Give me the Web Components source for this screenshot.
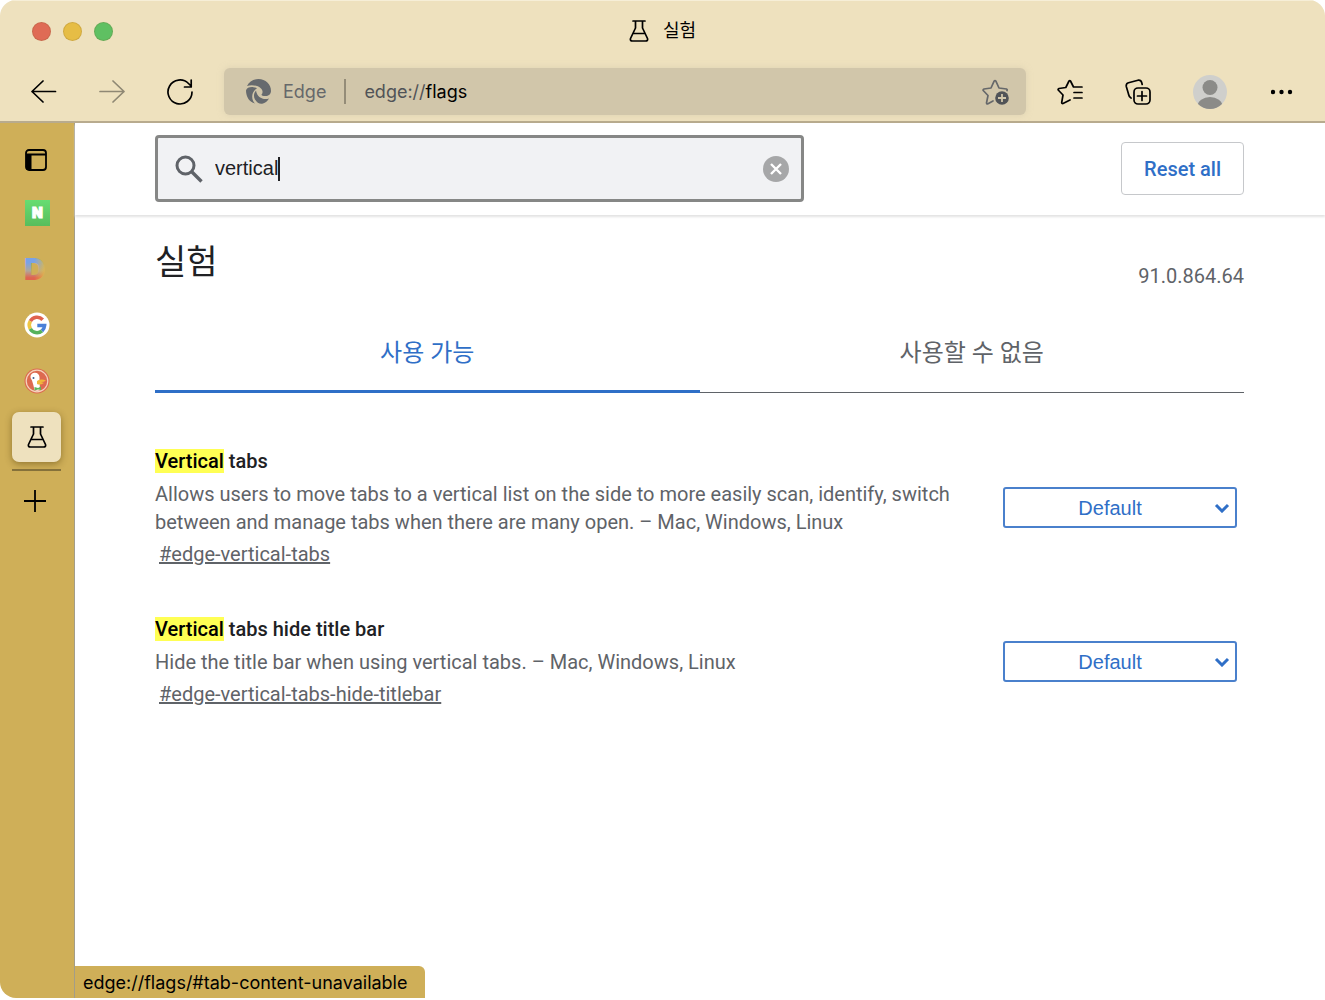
<!DOCTYPE html>
<html lang="ko">
<head>
<meta charset="utf-8">
<title>실험</title>
<style>
    html, body {
        margin: 0;
        background: white;
    }
    body {
        --bar-color: #eee1be;
        --field-color: #d1c6aa;
        --side-color: #cfaf58;
        --link-color: #2f6fc7;
        --text-color: #202124;
        --text-secondary-color: #5f6368;
        font-family: Roboto, "Noto Sans CJK KR", sans-serif;
        font-size: 20px;
        line-height: 28px;
        color: var(--text-color);
    }
</style>
</head>
<body>
<browser-window>
    <title-bar slot="title">실험</title-bar>
    <tool-bar slot="toolbar"></tool-bar>
    <side-tabs slot="tabs"></side-tabs>
    <flags-page>
        <flag-item flag="edge-vertical-tabs">
            <span slot="title"><mark style="background:#ffff54;color:black">Vertical</mark> tabs</span>
            <span slot="description">Allows users to move tabs to a vertical list on the side to more easily scan, identify, switch between and manage tabs when there are many open. – Mac, Windows, Linux</span>
        </flag-item>
        <flag-item flag="edge-vertical-tabs-hide-titlebar">
            <span slot="title"><mark style="background:#ffff54;color:black">Vertical</mark> tabs hide title bar</span>
            <span slot="description">Hide the title bar when using vertical tabs. – Mac, Windows, Linux</span>
        </flag-item>
    </flags-page>
    <status-bubble slot="status">edge://flags/#tab-content-unavailable</status-bubble>
</browser-window>

<script>
const line = 'fill="none" stroke="currentColor" stroke-width="1.7" stroke-linecap="round" stroke-linejoin="round"';

// name: [width, height, markup]
const icons = {
    flask: [20, 24, `<g ${line}><path d="M4 2H16M6.500 2V9L1.500 19.500Q.8 22 3.500 22H16.500Q19.200 22 18.500 19.500L13.500 9V2M4.500 14.500H15.500"/></g>`],
    back: [26, 24, `<g ${line}><path d="M24.500 11.500H1M12 1L1 11.500L12 22"/></g>`],
    forward: [26, 24, `<g ${line}><path d="M1 11.500H25M14 1L25 11.500L14 22"/></g>`],
    reload: [26, 26, `<g ${line}><path d="M25 13A12 12 0 1 1 21.500 4.500L24 7M24.200 1V8H17.500"/></g>`],
    edge: [25, 25, `<g fill="#666a6e"><path d="M1 7C3 2.500 8 0 12.500 0C19.500 0 25 5 25 12C25 15 22.500 17 19.500 17C17 17 15.500 16.500 15.500 15.500C17 14 17 11.500 15 9.500C12 6.300 5.500 5.300 1 7Z"/><path d="M0 11.500C.5 8.800 4 7.800 7.500 8.200C9.500 8.500 10.500 9 11 9.300C8.200 11 6.200 14 6.200 17.500C6.200 20.500 7.300 23 9 24.500C3.500 23 0 18 0 11.500Z"/><path d="M10 11.500C7.500 14.500 7.500 18 9 20.500C11 24 14 25.300 17 24.500C19.500 23.800 21.500 22 23 19.500C17.500 21.500 11 18.500 10 11.500Z"/></g>`],
    starAdd: [28, 28, `<g ${line}><path d="M11 23L5.500 26Q4.500 26 4.500 25L6 17.500L1.200 12.500Q.8 11.500 2 11L9 10L12 3.300Q13 2 14 3.300L17 10L24.500 11Q25.500 11.500 25 12.500"/></g><circle cx="20" cy="20" r="6.800" fill="#505357"/><path d="M20 16V24M16 20H24" stroke="#d1c6aa" stroke-width="1.800"/>`],
    favorites: [26, 26, `<g ${line}><path d="M13 21L6 24.500Q4.700 24.700 4.700 23.500L6 16L1.200 11Q.8 10 2 9.500L8.800 8.500L12 2Q12.800 1 13.500 2L16.500 8H25M17 13.500H25M17 19H25"/></g>`],
    collections: [26, 26, `<g ${line}><path d="M6 19C4 18 3.800 16.500 3.500 15L1.300 7.500Q.8 4.500 3.500 3.700L13 1.200Q16 .8 16.700 3.500L17.200 5.500"/><rect x="9" y="9" width="16" height="16" rx="4"/><path d="M17 12.500V21.500M12.500 17H21.500"/></g>`],
    avatar: [34, 34, `<clipPath id="c"><circle cx="17" cy="17" r="17"/></clipPath><g clip-path="url(#c)"><rect width="34" height="34" fill="#cfcfcc"/><circle cx="17" cy="12.500" r="7.500" fill="#8b8b88"/><ellipse cx="17" cy="31.500" rx="12.500" ry="9.500" fill="#8b8b88"/></g>`],
    more: [22, 6, `<circle cx="2" cy="3" r="2.200"/><circle cx="10.500" cy="3" r="2.200"/><circle cx="19" cy="3" r="2.200"/>`],
    panel: [26, 24, `<rect x="2" y="2" width="20" height="20" rx="3" fill="none" stroke="black" stroke-width="1.800"/><path d="M2 6.500H22" stroke="black" stroke-width="1.800"/><path d="M2 6H7.500V22H4Q2 22 2 20Z"/>`],
    naver: [26, 26, `<defs><linearGradient id="n" x2="0" y2="1"><stop stop-color="#67dd72"/><stop offset="1" stop-color="#58bd5c"/></linearGradient></defs><rect x="1" width="25" height="26" fill="url(#n)"/><text x="13.500" y="18" text-anchor="middle" font-family="Inter, sans-serif" font-weight="900" font-size="14" fill="white" stroke="white">N</text>`],
    daum: [28, 38, `<defs><linearGradient id="v" x2="0" y2="1"><stop offset=".3" stop-color="#78a2e8"/><stop offset=".6" stop-color="#b0a79a"/><stop offset=".85" stop-color="#e0634f"/></linearGradient><linearGradient id="h"><stop offset=".4" stop-color="#e8bb3d" stop-opacity="0"/><stop offset=".9" stop-color="#e8bb3d"/></linearGradient><pattern id="d" width="28" height="38" patternUnits="userSpaceOnUse"><rect y="4" width="28" height="28" fill="url(#v)"/><rect y="4" width="28" height="28" fill="url(#h)"/></pattern></defs><text x="1" y="30" font-family="Inter, sans-serif" font-weight="900" font-size="30" fill="url(#d)">D</text>`],
    google: [26, 26, `<circle cx="13" cy="13" r="12.500" fill="white"/><g fill="none" stroke-width="3.600"><path d="M18.700 7.800A7.700 7.700 0 0 0 6.300 9.200" stroke="#e0634f"/><path d="M6.300 9.200A7.700 7.700 0 0 0 6.300 16.800" stroke="#eec643"/><path d="M6.300 16.800A7.700 7.700 0 0 0 18 18.800" stroke="#57b25c"/><path d="M18 18.800A7.700 7.700 0 0 0 20.600 13.500H13.300" stroke="#4a80d8"/></g>`],
    duck: [26, 26, `<circle cx="13" cy="13" r="12.500" fill="#dd6a50"/><circle cx="13" cy="13" r="10.800" fill="none" stroke="#f4d4bd" stroke-width="1.200"/><path d="M6.500 8Q8 4.500 11 4.800Q15 5 15.500 9V14L16 22Q13 23.500 10.500 22Q9.500 17 8 12.500Q6 10 6.500 8Z" fill="white"/><path d="M13 13Q17 10.500 22 12.500Q20 14 17 14L20 15Q16 17.500 13 16Z" fill="#f0b93a"/><path d="M10.500 19L14 20L17 18.500V22L14 21.500L10.500 22.500Z" fill="#5fb65a"/><circle cx="9.500" cy="10" r="1" fill="#3d5d8c"/>`],
    plus: [26, 22, `<path d="M11 0V22M0 11H22" stroke="currentColor" stroke-width="1.800"/>`],
    search: [28, 28, `<circle cx="10.500" cy="10.500" r="8.500" fill="none" stroke="currentColor" stroke-width="3"/><path d="M16.500 16.500L26.500 26.500" stroke="currentColor" stroke-width="3.400"/>`],
    clear: [26, 26, `<circle cx="13" cy="13" r="13" fill="#a6a7a8"/><path d="M8 8L18 18M18 8L8 18" stroke="white" stroke-width="2.400"/>`],
    chevron: [16, 10, `<path d="M2 2L8 8L14 2" fill="none" stroke="currentColor" stroke-width="3"/>`]
};

class BaseElement extends HTMLElement {
    constructor() {
        super();
        this.attachShadow({ mode: 'open' });
    }

    connectedCallback() {
        this.render();
    }
}

class UiIcon extends BaseElement {
    render() {
        const [width, height, markup] = icons[this.getAttribute('name')];
        this.shadowRoot.innerHTML = `
        <style>
            :host { display: inline-flex; flex: none; }
            svg { display: block; }
        </style>
        <svg width="${width}" height="${height}" viewBox="0 0 ${width} ${height}" fill="currentColor" aria-hidden="true">${markup}</svg>
        `;
    }
}

class BrowserWindow extends BaseElement {
    render() {
        this.shadowRoot.innerHTML = `
        <style>
            :host {
                display: flex;
                flex-direction: column;
                position: relative;
                box-sizing: border-box;
                min-height: calc(100vh - 2px);
                border-radius: 16px;
                overflow: hidden;
            }
            header {
                background: var(--bar-color);
                border-bottom: 2px solid #b8ab8e;
                box-shadow: inset 0 1px #f6eed7;
            }
            .body {
                display: flex;
                flex: 1;
            }
            main {
                flex: 1;
                min-width: 0;
            }
            .status {
                position: absolute;
                left: 75px;
                bottom: 0;
            }
        </style>
        <header>
            <slot name="title"></slot>
            <slot name="toolbar"></slot>
        </header>
        <div class="body">
            <slot name="tabs"></slot>
            <main><slot></slot></main>
        </div>
        <div class="status"><slot name="status"></slot></div>
        `;
    }
}

class TitleBar extends BaseElement {
    render() {
        this.shadowRoot.innerHTML = `
        <style>
            :host {
                display: grid;
                grid-template-columns: 1fr auto 1fr;
                align-items: center;
                height: 62px;
                padding: 0 32px;
                font-size: 18px;
                color: black;
            }
            .lights {
                display: flex;
                gap: 12px;
            }
            .lights button {
                width: 19px;
                height: 19px;
                padding: 0;
                border: 1px solid rgba(120, 90, 40, 0.2);
                border-radius: 50%;
            }
            .close { background: #df6b55; }
            .minimize { background: #e6bd45; }
            .zoom { background: #5fc062; }
            .title {
                display: flex;
                align-items: center;
                gap: 14px;
            }
        </style>
        <div class="lights">
            <button class="close" aria-label="닫기"></button>
            <button class="minimize" aria-label="최소화"></button>
            <button class="zoom" aria-label="확대"></button>
        </div>
        <div class="title"><ui-icon name="flask"></ui-icon><slot></slot></div>
        `;
    }
}

class ToolButton extends BaseElement {
    render() {
        this.shadowRoot.innerHTML = `
        <style>
            :host {
                display: block;
                flex: none;
            }
            button {
                display: flex;
                align-items: center;
                justify-content: center;
                width: var(--button-width, 48px);
                height: 48px;
                padding: 0;
                border: none;
                background: none;
                color: black;
            }
            button:disabled { color: #8f8874; }
        </style>
        <button aria-label="${this.getAttribute('label')}" ${this.hasAttribute('disabled') ? 'disabled' : ''}>
            <ui-icon name="${this.getAttribute('icon')}"></ui-icon>
        </button>
        `;
    }
}

class ToolBar extends BaseElement {
    render() {
        this.shadowRoot.innerHTML = `
        <style>
            :host {
                display: flex;
                align-items: center;
                gap: 20px;
                height: 59px;
                padding: 0 19px 0 20px;
            }
            .address {
                display: flex;
                align-items: center;
                flex: 1;
                height: 47px;
                padding: 0 16px 0 22px;
                border-radius: 6px;
                background: var(--field-color);
                box-shadow: 0 0 6px rgba(209, 198, 170, 0.6);
                color: #66686a;
                font-family: Inter, sans-serif;
                font-size: 18px;
            }
            .site { margin-left: 12px; }
            .divider {
                width: 2px;
                height: 25px;
                margin: 0 18px;
                background: #948c78;
            }
            .url {
                flex: 1;
                color: #505357;
            }
            b {
                font-weight: 400;
                color: black;
            }
            .star {
                display: flex;
                padding: 0;
                border: none;
                background: none;
                color: #66686a;
            }
            .wide { --button-width: 56px; }
        </style>
        <tool-button icon="back" label="뒤로"></tool-button>
        <tool-button icon="forward" label="앞으로" disabled></tool-button>
        <tool-button icon="reload" label="새로 고침"></tool-button>
        <div class="address">
            <ui-icon name="edge"></ui-icon>
            <span class="site">Edge</span>
            <span class="divider"></span>
            <span class="url">edge://<b>flags</b></span>
            <button class="star" aria-label="즐겨찾기에 추가"><ui-icon name="starAdd"></ui-icon></button>
        </div>
        <tool-button icon="favorites" label="즐겨찾기"></tool-button>
        <tool-button icon="collections" label="컬렉션"></tool-button>
        <tool-button class="wide" icon="avatar" label="프로필"></tool-button>
        <tool-button icon="more" label="설정 및 기타"></tool-button>
        `;
    }
}

class SideTabs extends BaseElement {
    render() {
        this.shadowRoot.innerHTML = `
        <style>
            :host {
                display: flex;
                flex-direction: column;
                gap: 6px;
                box-sizing: border-box;
                width: 75px;
                padding: 15px 13px 0 12px;
                border-right: 1px solid #a39d88;
                background: var(--side-color);
            }
            button {
                display: flex;
                align-items: center;
                justify-content: center;
                height: 50px;
                padding: 0;
                border: none;
                border-radius: 7px;
                background: none;
                color: black;
            }
            .menu { height: 44px; }
            .active {
                background: var(--bar-color);
                box-shadow: 0 2px 7px rgba(70, 50, 0, 0.45);
            }
            hr {
                width: 100%;
                height: 2px;
                margin: 1px 0 -1px;
                border: none;
                background: #85713a;
            }
        </style>
        <button class="menu" aria-label="탭 메뉴"><ui-icon name="panel"></ui-icon></button>
        <button aria-label="네이버"><ui-icon name="naver"></ui-icon></button>
        <button aria-label="다음"><ui-icon name="daum"></ui-icon></button>
        <button aria-label="구글"><ui-icon name="google"></ui-icon></button>
        <button aria-label="덕덕고"><ui-icon name="duck"></ui-icon></button>
        <button class="active" aria-label="실험"><ui-icon name="flask"></ui-icon></button>
        <hr>
        <button aria-label="새 탭"><ui-icon name="plus"></ui-icon></button>
        `;
    }
}

class SearchBox extends BaseElement {
    render() {
        this.shadowRoot.innerHTML = `
        <style>
            :host {
                display: flex;
                align-items: center;
                box-sizing: border-box;
                height: 67px;
                padding: 0 12px 0 17px;
                border: 3px solid #868786;
                border-radius: 4px;
                background: #f1f2f4;
                color: var(--text-secondary-color);
            }
            label {
                display: flex;
                align-items: center;
                flex: 1;
            }
            input {
                field-sizing: content;
                margin-left: 12px;
                padding: 0;
                border: none;
                outline: none;
                background: none;
                font: 20px "Liberation Sans", sans-serif;
                color: var(--text-color);
                caret-color: transparent;
            }
            .caret {
                width: 2px;
                height: 24px;
                background: var(--text-color);
            }
            button {
                display: flex;
                padding: 0;
                border: none;
                background: none;
            }
        </style>
        <label for="search">
            <ui-icon name="search"></ui-icon>
            <input id="search" type="text" value="vertical" aria-label="플래그 검색">
            <span class="caret"></span>
        </label>
        <button aria-label="지우기"><ui-icon name="clear"></ui-icon></button>
        `;
    }
}

class FlagsPage extends BaseElement {
    render() {
        this.shadowRoot.innerHTML = `
        <style>
            :host { display: block; }
            .top {
                display: flex;
                align-items: center;
                justify-content: space-between;
                padding: 12px 81px 13px 80px;
                box-shadow: 0 2px 2px #e4e4e4;
            }
            search-box { flex: 0 1 649px; }
            .reset {
                height: 53px;
                padding: 0 22px;
                border: 1px solid #c6c8cb;
                border-radius: 4px;
                background: white;
                font: 500 20px Roboto, sans-serif;
                color: var(--link-color);
            }
            .content { padding: 0 81px 0 80px; }
            .heading {
                display: flex;
                align-items: flex-end;
                justify-content: space-between;
                height: 75px;
                color: var(--text-secondary-color);
            }
            h1 {
                margin: 0;
                font-size: 34px;
                line-height: 56px;
                font-weight: 400;
                color: var(--text-color);
            }
            nav {
                display: grid;
                grid-template-columns: 1fr 1fr;
                margin: 21px 0 54px;
            }
            a {
                box-sizing: border-box;
                height: 82px;
                padding-top: 28px;
                border-bottom: 1px solid var(--text-secondary-color);
                text-align: center;
                text-decoration: none;
                font-size: 24px;
                color: var(--text-secondary-color);
            }
            .selected {
                border-bottom: 3px solid var(--link-color);
                color: var(--link-color);
            }
            .list {
                display: flex;
                flex-direction: column;
                gap: 47px;
            }
        </style>
        <div class="top">
            <search-box></search-box>
            <button class="reset">Reset all</button>
        </div>
        <div class="content">
            <div class="heading"><h1>실험</h1><span>91.0.864.64</span></div>
            <nav>
                <a class="selected" href="#tab-content-available">사용 가능</a>
                <a href="#tab-content-unavailable">사용할 수 없음</a>
            </nav>
            <div class="list"><slot></slot></div>
        </div>
        `;
    }
}

class FlagItem extends BaseElement {
    render() {
        const flag = this.getAttribute('flag');
        this.shadowRoot.innerHTML = `
        <style>
            :host {
                display: grid;
                grid-template-columns: 1fr 234px;
                gap: 40px;
                align-items: center;
                padding-right: 7px;
                color: var(--text-secondary-color);
            }
            h3 {
                margin: 0;
                font-size: 20px;
                font-weight: 500;
                color: var(--text-color);
            }
            p { margin: 5px 0 4px; }
            a {
                display: table;
                margin-left: 4px;
                color: inherit;
            }
            .choice {
                display: grid;
                align-items: center;
                color: var(--link-color);
            }
            select, .choice ui-icon { grid-area: 1 / 1; }
            select {
                appearance: none;
                height: 41px;
                padding: 1px 20px 0 0;
                border: 2px solid #4a80cc;
                border-radius: 3px;
                background: white;
                font: 20px "Liberation Sans", sans-serif;
                text-align-last: center;
                color: inherit;
            }
            .choice ui-icon {
                justify-self: end;
                margin-right: 7px;
                pointer-events: none;
            }
        </style>
        <div class="text">
            <h3 id="name"><slot name="title"></slot></h3>
            <p><slot name="description"></slot></p>
            <a href="#${flag}">#${flag}</a>
        </div>
        <div class="choice">
            <select aria-labelledby="name">
                <option>Default</option>
                <option>Enabled</option>
                <option>Disabled</option>
            </select>
            <ui-icon name="chevron"></ui-icon>
        </div>
        `;
    }
}

class StatusBubble extends BaseElement {
    render() {
        this.shadowRoot.innerHTML = `
        <style>
            :host {
                display: block;
                padding: 3px 18px 1px 8px;
                border-radius: 0 6px 0 0;
                background: var(--side-color);
                font-family: Inter, sans-serif;
                font-size: 18px;
                color: black;
            }
        </style>
        <slot></slot>
        `;
    }
}

customElements.define('ui-icon', UiIcon);
customElements.define('browser-window', BrowserWindow);
customElements.define('title-bar', TitleBar);
customElements.define('tool-button', ToolButton);
customElements.define('tool-bar', ToolBar);
customElements.define('side-tabs', SideTabs);
customElements.define('search-box', SearchBox);
customElements.define('flags-page', FlagsPage);
customElements.define('flag-item', FlagItem);
customElements.define('status-bubble', StatusBubble);
</script>
</body>
</html>
